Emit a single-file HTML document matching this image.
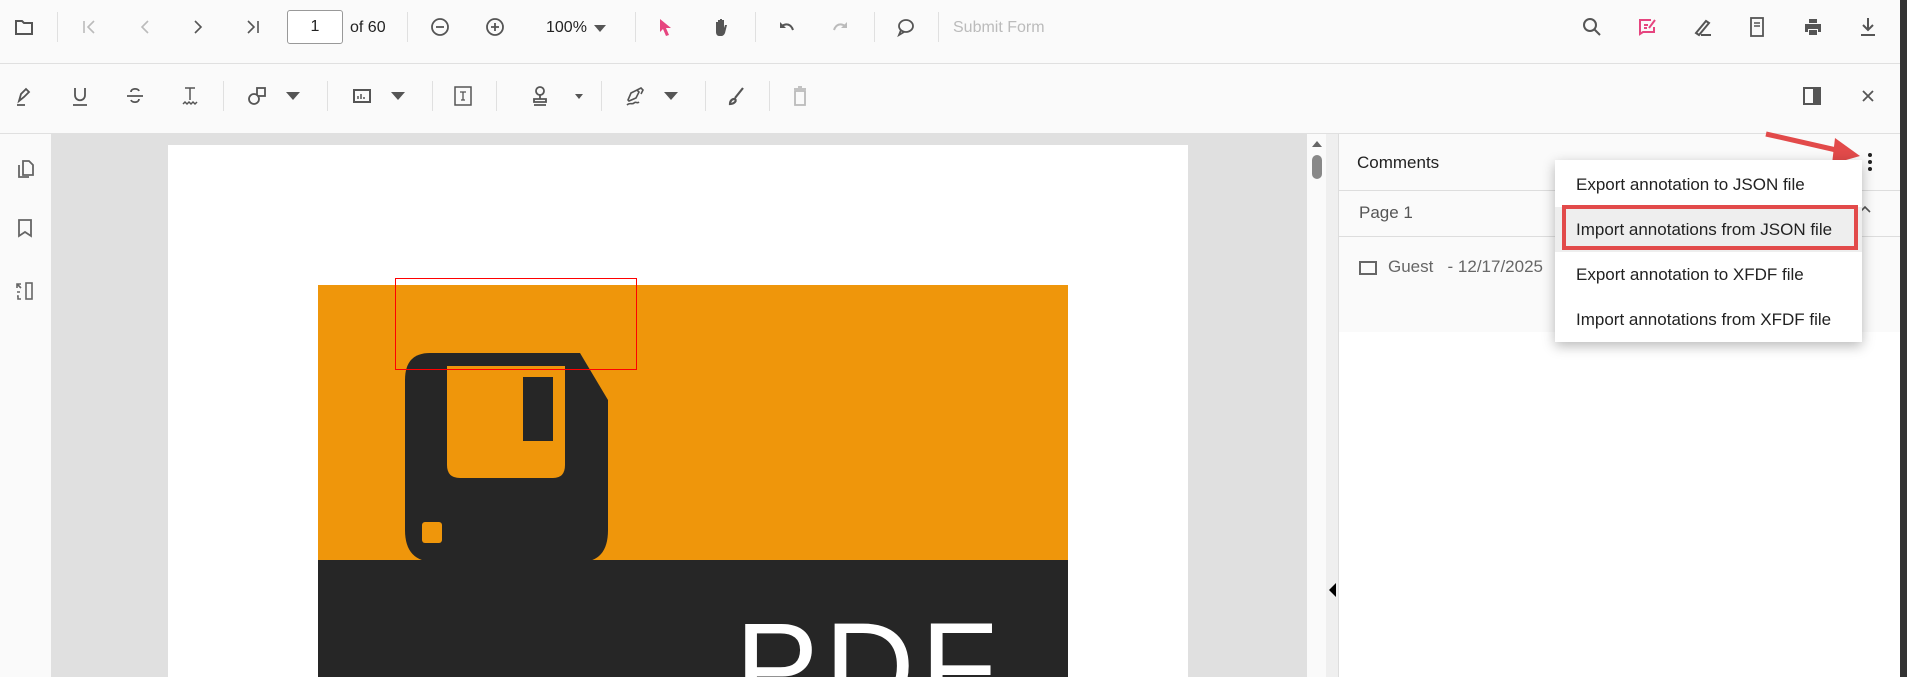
<!DOCTYPE html>
<html style="width:1907px;height:677px;overflow:hidden"><head><meta charset="utf-8"><style>
*{margin:0;padding:0;box-sizing:border-box}
body{width:1907px;height:677px;overflow:hidden;background:#fafafa;font-family:"Liberation Sans",Roboto,sans-serif;position:relative;color:#222}
.a{position:absolute}
.ic{position:absolute;width:22px;height:22px;transform:translate(-11px,-11px)}
.sep{position:absolute;width:1px;background:#e0e0e0}
.mi{position:absolute;left:0;width:307px;height:45px;line-height:45px;padding-left:21px;font-size:17px;color:#222}
</style></head><body>
<div class="a" style="left:0;top:63px;width:1900px;height:1px;background:#e0e0e0"></div>
<div class="a" style="left:0;top:133px;width:1900px;height:1px;background:#e0e0e0"></div>
<div class="a" style="left:1900px;top:0;width:7px;height:677px;background:#333"></div>

<svg class="ic" style="left:24px;top:27px" viewBox="0 0 22 22"><path d="M3 5h6l2 2h8v11H3z" fill="none" stroke="#555" stroke-width="2"/></svg>
<div class="sep" style="left:57px;top:12px;height:30px"></div>
<svg class="ic" style="left:89px;top:27px" viewBox="0 0 22 22"><path d="M6 5v12M16 5l-6 6 6 6" fill="none" stroke="#bbb" stroke-width="1.6"/></svg>
<svg class="ic" style="left:145px;top:27px" viewBox="0 0 22 22"><path d="M14 5l-6 6 6 6" fill="none" stroke="#bbb" stroke-width="1.6"/></svg>
<svg class="ic" style="left:198px;top:27px" viewBox="0 0 22 22"><path d="M8 5l6 6-6 6" fill="none" stroke="#555" stroke-width="1.6"/></svg>
<svg class="ic" style="left:253px;top:27px" viewBox="0 0 22 22"><path d="M6 5l6 6-6 6M16 5v12" fill="none" stroke="#555" stroke-width="1.6"/></svg>
<div class="a" style="left:287px;top:10px;width:56px;height:34px;border:1px solid #999;border-radius:3px;background:#fff;text-align:center;line-height:32px;font-size:16px">1</div>
<div class="a" style="left:350px;top:19px;font-size:16px">of 60</div>
<div class="sep" style="left:407px;top:12px;height:30px"></div>
<svg class="ic" style="left:440px;top:27px" viewBox="0 0 22 22"><circle cx="11" cy="11" r="8" fill="none" stroke="#555" stroke-width="1.8"/><path d="M7 11h8" stroke="#555" stroke-width="1.8"/></svg>
<svg class="ic" style="left:495px;top:27px" viewBox="0 0 22 22"><circle cx="11" cy="11" r="8" fill="none" stroke="#555" stroke-width="1.8"/><path d="M7 11h8M11 7v8" stroke="#555" stroke-width="1.8"/></svg>
<div class="a" style="left:546px;top:19px;font-size:16px">100%</div>
<svg class="ic" style="left:600px;top:28px" viewBox="0 0 22 22"><path d="M5 8h12l-6 7z" fill="#555"/></svg>
<div class="sep" style="left:635px;top:12px;height:30px"></div>
<svg class="ic" style="left:665px;top:27px" viewBox="0 0 22 22"><path d="M6 3l11 9h-5l3 7-3 1-3-7-3 3z" fill="#e6457f"/></svg>
<svg class="ic" style="left:721px;top:27px" viewBox="0 0 22 22"><path d="M6 12V6h2v5-7h2v7-8h2v8-7h2v8l1-3h2l-2 8c-1 2-2 3-4 3H9c-2 0-3-2-3-4z" fill="#555"/></svg>
<div class="sep" style="left:755px;top:12px;height:30px"></div>
<svg class="ic" style="left:787px;top:28px" viewBox="0 0 22 22"><path d="M6 9c4-3 9-2 11 4" fill="none" stroke="#555" stroke-width="2"/><path d="M4 5v6h6z" fill="#555"/></svg>
<svg class="ic" style="left:840px;top:28px" viewBox="0 0 22 22"><path d="M16 9c-4-3-9-2-11 4" fill="none" stroke="#bbb" stroke-width="2"/><path d="M18 5v6h-6z" fill="#bbb"/></svg>
<div class="sep" style="left:874px;top:12px;height:30px"></div>
<svg class="ic" style="left:905px;top:27px" viewBox="0 0 22 22"><ellipse cx="12" cy="10" rx="7" ry="6" fill="none" stroke="#555" stroke-width="1.8"/><path d="M7 14l-2 5 5-3" fill="none" stroke="#555" stroke-width="1.8"/></svg>
<div class="sep" style="left:938px;top:12px;height:30px"></div>
<div class="a" style="left:953px;top:19px;font-size:16px;color:#bbb">Submit Form</div>

<svg class="ic" style="left:1592px;top:27px" viewBox="0 0 22 22"><circle cx="9" cy="9" r="6" fill="none" stroke="#555" stroke-width="2"/><path d="M13 13l6 6" stroke="#555" stroke-width="2"/></svg>
<svg class="ic" style="left:1647px;top:27px" viewBox="0 0 22 22"><path d="M15 4H4v14l3-2h11v-5" fill="none" stroke="#e6457f" stroke-width="2"/><path d="M8 9h4M8 12h3M13 12l6-8" stroke="#e6457f" stroke-width="2"/></svg>
<svg class="ic" style="left:1703px;top:27px" viewBox="0 0 22 22"><path d="M4 17L14 5l3 2L7 19zM9 19h10" fill="none" stroke="#555" stroke-width="2"/></svg>
<svg class="ic" style="left:1757px;top:27px" viewBox="0 0 22 22"><rect x="5" y="2" width="12" height="18" fill="none" stroke="#555" stroke-width="1.8"/><path d="M8 7h6M8 10h6" stroke="#555" stroke-width="1.5"/></svg>
<svg class="ic" style="left:1813px;top:27px" viewBox="0 0 22 22"><path d="M7 3h8v4H7zM3 8h16v8h-3v-3H6v3H3zM7 14h8v5H7z" fill="#555"/></svg>
<svg class="ic" style="left:1868px;top:27px" viewBox="0 0 22 22"><path d="M11 2v12M6 9l5 5 5-5M4 19h14" fill="none" stroke="#555" stroke-width="2"/></svg>

<svg class="ic" style="left:24px;top:96px" viewBox="0 0 22 22"><path d="M6 16l2-7 5-5 3 3-5 5zM4 20h8" fill="none" stroke="#555" stroke-width="1.8"/></svg>
<svg class="ic" style="left:80px;top:96px" viewBox="0 0 22 22"><path d="M6 3v7c0 7 10 7 10 0V3M4 20h14" fill="none" stroke="#555" stroke-width="1.8"/></svg>
<svg class="ic" style="left:135px;top:96px" viewBox="0 0 22 22"><path d="M15 6c-1-3-8-3-8 1M3 11h16M7 15c1 3 8 3 8-1" fill="none" stroke="#555" stroke-width="1.8"/></svg>
<svg class="ic" style="left:190px;top:96px" viewBox="0 0 22 22"><path d="M6 3h10M11 3v12M4 19l2-2 2 2 2-2 2 2 2-2 2 2 2-2" fill="none" stroke="#555" stroke-width="1.5"/></svg>
<div class="sep" style="left:223px;top:81px;height:30px"></div>
<svg class="ic" style="left:258px;top:96px" viewBox="0 0 22 22"><rect x="10" y="3" width="8" height="8" fill="none" stroke="#555" stroke-width="1.8"/><circle cx="7" cy="14" r="5" fill="#fafafa" stroke="#555" stroke-width="1.8"/></svg>
<svg class="ic" style="left:293px;top:96px" viewBox="0 0 22 22"><path d="M4 7h14l-7 8z" fill="#555"/></svg>
<div class="sep" style="left:327px;top:81px;height:30px"></div>
<svg class="ic" style="left:362px;top:96px" viewBox="0 0 22 22"><rect x="3" y="5" width="16" height="12" fill="none" stroke="#555" stroke-width="2"/><path d="M7 14v-3M10 14v-5M13 14v-2" stroke="#555" stroke-width="1.5"/></svg>
<svg class="ic" style="left:398px;top:96px" viewBox="0 0 22 22"><path d="M4 7h14l-7 8z" fill="#555"/></svg>
<div class="sep" style="left:432px;top:81px;height:30px"></div>
<svg class="ic" style="left:463px;top:96px" viewBox="0 0 22 22"><rect x="3" y="2" width="16" height="18" fill="none" stroke="#555" stroke-width="1.5"/><path d="M8 7h6M11 7v8M9 15h4" stroke="#555" stroke-width="1.3"/></svg>
<div class="sep" style="left:496px;top:81px;height:30px"></div>
<svg class="ic" style="left:540px;top:96px" viewBox="0 0 22 22"><circle cx="11" cy="6" r="4" fill="none" stroke="#555" stroke-width="1.8"/><path d="M11 10v4M5 14h12v3H5zM5 20h12" fill="none" stroke="#555" stroke-width="1.8"/></svg>
<svg class="ic" style="left:579px;top:96px" viewBox="0 0 22 22"><path d="M7 9h8l-4 5z" fill="#555"/></svg>
<div class="sep" style="left:601px;top:81px;height:30px"></div>
<svg class="ic" style="left:635px;top:96px" viewBox="0 0 22 22"><path d="M4 15l3-7 6-3 2 2-3 6-7 3zM13 5l4-2 2 2-2 4M3 20c3-3 5 0 7-2 2-2 3 1 5-1" fill="none" stroke="#555" stroke-width="1.6"/></svg>
<svg class="ic" style="left:671px;top:96px" viewBox="0 0 22 22"><path d="M4 7h14l-7 8z" fill="#555"/></svg>
<div class="sep" style="left:705px;top:81px;height:30px"></div>
<svg class="ic" style="left:737px;top:96px" viewBox="0 0 22 22"><path d="M17 3L9 13M4 19c0-3 2-5 4-5s2 2 1 3-3 2-5 2z" fill="none" stroke="#555" stroke-width="2.2"/></svg>
<div class="sep" style="left:769px;top:81px;height:30px"></div>
<svg class="ic" style="left:800px;top:96px" viewBox="0 0 22 22"><path d="M5 4h12M9 2h4M6 6h10v14H6z" fill="none" stroke="#bbb" stroke-width="1.8"/></svg>
<svg class="ic" style="left:1812px;top:96px" viewBox="0 0 22 22"><rect x="3" y="3" width="16" height="16" fill="none" stroke="#555" stroke-width="2"/><rect x="12" y="3" width="7" height="16" fill="#555"/></svg>
<svg class="ic" style="left:1868px;top:96px" viewBox="0 0 22 22"><path d="M6 6l10 10M16 6L6 16" stroke="#555" stroke-width="1.8"/></svg>

<div class="a" style="left:51px;top:134px;width:1256px;height:543px;background:#e0e0e0;overflow:hidden">
  <div class="a" style="left:117px;top:11px;width:1020px;height:532px;background:#fff"></div>
  <div class="a" style="left:267px;top:151px;width:750px;height:275px;background:#ef960b"></div>
  <div class="a" style="left:267px;top:426px;width:750px;height:117px;background:#262626;overflow:hidden">
    <div class="a" style="left:417px;top:45px;font-size:125px;line-height:1;color:#fff;letter-spacing:6px">PDF</div>
  </div>
  <svg class="a" style="left:354px;top:216px" width="205" height="215" viewBox="0 0 205 215">
  <path d="M0 30Q0 3 25 3H175L203 50V180Q203 212 175 212H30Q0 212 0 180Z" fill="#262626"/>
  <path d="M42 16H160V115Q160 128 148 128H55Q42 128 42 115Z" fill="#ef960b"/>
  <rect x="118" y="27" width="30" height="64" fill="#262626"/>
  <rect x="17" y="172" width="20" height="21" rx="3" fill="#ef960b"/>
  </svg>
  <div class="a" style="left:344px;top:144px;width:242px;height:92px;border:1px solid #f00"></div>
</div>

<svg class="ic" style="left:25px;top:169px" viewBox="0 0 22 22"><path d="M9 3h6l4 4v10H9zM5 7v12h10" fill="none" stroke="#666" stroke-width="1.8"/></svg>
<svg class="ic" style="left:25px;top:228px" viewBox="0 0 22 22"><path d="M5 3h12v16l-6-4-6 4z" fill="none" stroke="#666" stroke-width="1.8"/></svg>
<svg class="ic" style="left:25px;top:291px" viewBox="0 0 22 22"><rect x="12" y="3" width="6" height="16" fill="none" stroke="#666" stroke-width="1.6"/><path d="M3 4l4 4M3 8V4h4M3 12h3M3 16h1v3h3" fill="none" stroke="#666" stroke-width="1.6"/></svg>

<div class="a" style="left:1307px;top:134px;width:19px;height:543px;background:#fafafa"></div>
<svg class="a" style="left:1311px;top:139px" width="12" height="10"><path d="M1 8h10L6 2z" fill="#666"/></svg>
<div class="a" style="left:1312px;top:155px;width:10px;height:24px;border-radius:5px;background:#888"></div>
<div class="a" style="left:1326px;top:134px;width:12px;height:543px;background:#efefef"></div>
<svg class="a" style="left:1329px;top:583px" width="8" height="14"><path d="M7 0v14L0 7z" fill="#000"/></svg>

<div class="a" style="left:1338px;top:134px;width:562px;height:543px;background:#fff;border-left:1px solid #ddd"></div>
<div class="a" style="left:1339px;top:134px;width:561px;height:198px;background:#fafafa"></div>
<div class="a" style="left:1357px;top:153px;font-size:17px;color:#222">Comments</div>
<div class="a" style="left:1339px;top:190px;width:561px;height:47px;border-top:1px solid #ddd;border-bottom:1px solid #ddd;background:#fafafa"></div>
<div class="a" style="left:1359px;top:203px;font-size:17px;color:#555">Page 1</div>
<svg class="a" style="left:1858px;top:204px" width="14" height="10"><path d="M2 8l5-5 5 5" fill="none" stroke="#555" stroke-width="1.6"/></svg>
<div class="a" style="left:1359px;top:261px;width:18px;height:14px;border:2px solid #666"></div>
<div class="a" style="left:1388px;top:257px;font-size:17px;color:#666">Guest &nbsp;&nbsp;- 12/17/2025</div>
<div class="a" style="left:1868px;top:153px;width:4px;height:4px;border-radius:2px;background:#222;box-shadow:0 7px 0 #222,0 14px 0 #222"></div>
<svg class="a" style="left:1760px;top:128px" width="110" height="40"><path d="M6 6L85 24" stroke="#e24a4a" stroke-width="5"/><path d="M75 10L100 28 72 36z" fill="#e24a4a"/></svg>

<div class="a" style="left:1555px;top:160px;width:307px;height:182px;background:#fff;box-shadow:0 4px 12px rgba(0,0,0,.28)">
<div class="mi" style="top:2px">Export annotation to JSON file</div>
<div class="mi" style="top:47px;background:#eee">Import annotations from JSON file</div>
<div class="a" style="left:7px;top:45px;width:296px;height:45px;border:4px solid #e24a4a"></div>
<div class="mi" style="top:92px">Export annotation to XFDF file</div>
<div class="mi" style="top:137px">Import annotations from XFDF file</div>
</div>
</body></html>
